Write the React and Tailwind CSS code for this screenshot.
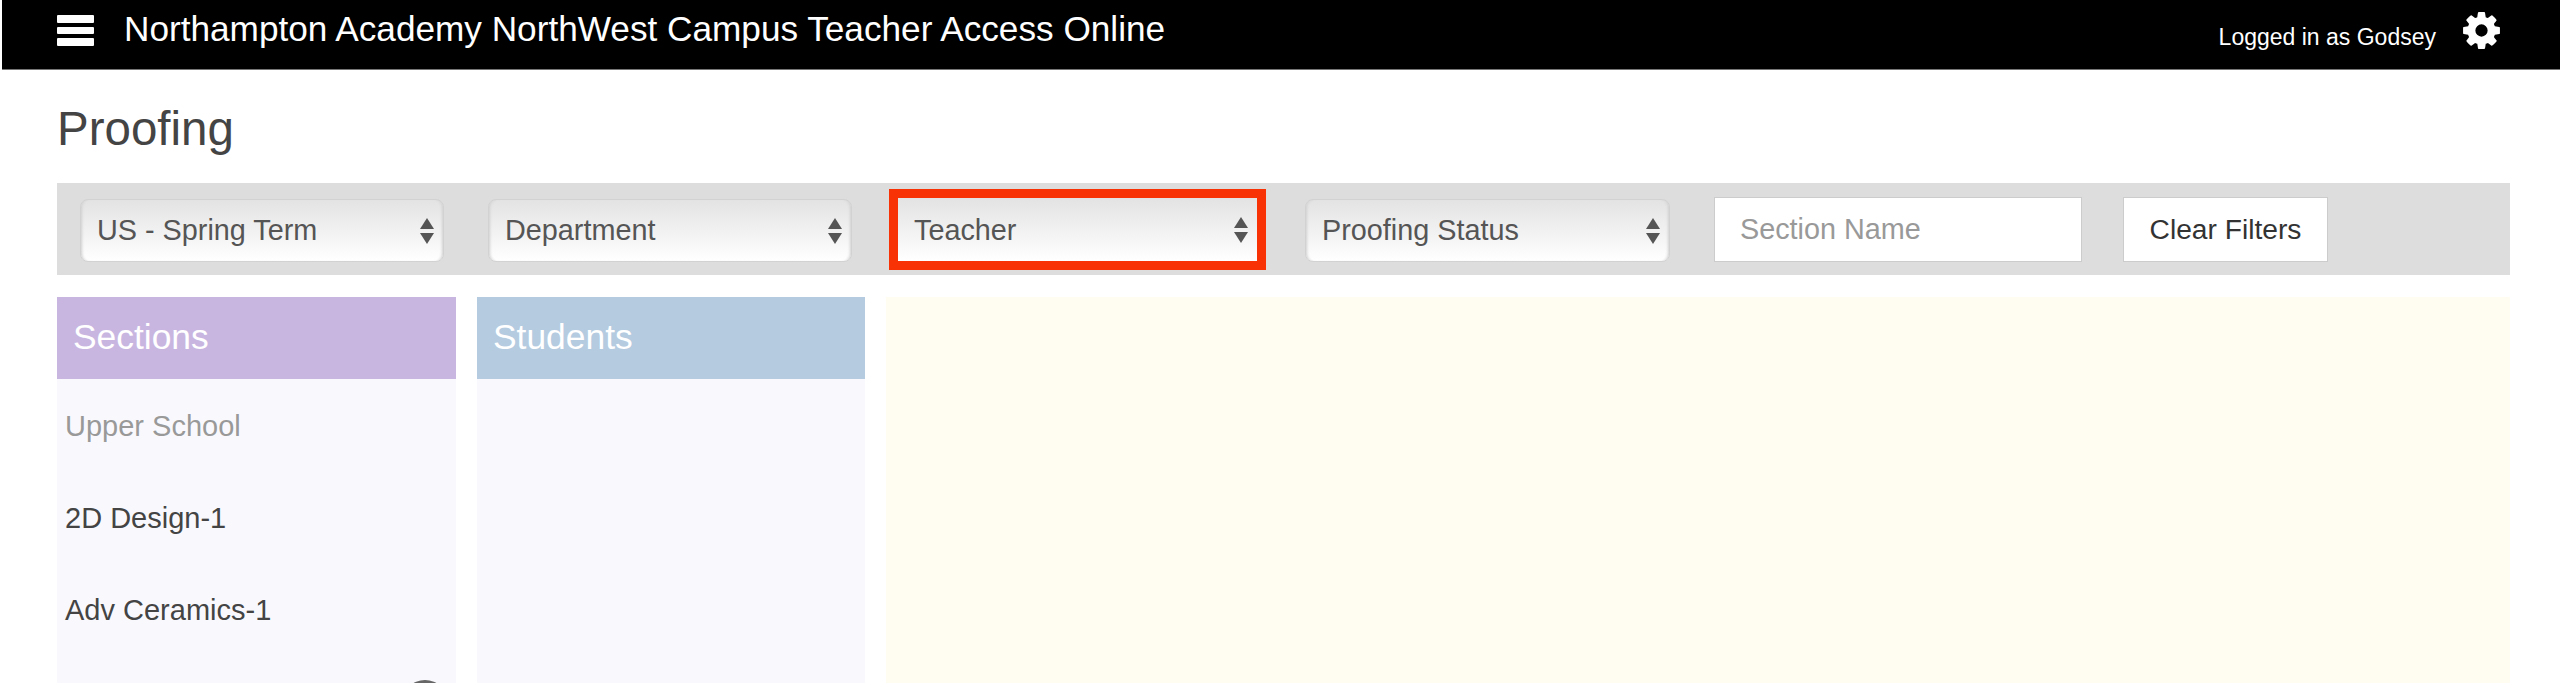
import React from 'react';

const ITEMS = [
  { label: 'Upper School', muted: true },
  { label: '2D Design-1' },
  { label: 'Adv Ceramics-1' },
];

function SelectBox({ label, highlighted, className = '' }) {
  const frame = highlighted
    ? 'rounded-none shadow-[0_0_0_9px_#f93205]'
    : 'mt-[3px] rounded-lg border border-[#d2d2d2] shadow-[inset_3px_0_3px_-2px_#cfcfcf,inset_-3px_0_3px_-2px_#cfcfcf]';
  return (
    <div className={`flex items-center justify-between h-[63px] pl-[16px] pr-[9px] bg-gradient-to-b from-[#e3e3e3] to-white text-[28.8px] text-[#555555] ${frame} ${className}`}>
      <span className={highlighted ? 'mt-[3px]' : 'mt-[1px]'}>{label}</span>
      <svg width="14" height="26" viewBox="0 0 14 26" fill="#555555" className={`shrink-0 ${highlighted ? 'mt-[1px]' : ''}`}>
        <path d="M7 0 L14 11 L0 11 Z" />
        <path d="M0 15 L14 15 L7 26 Z" />
      </svg>
    </div>
  );
}

export default function App() {
  return (
    <div className="h-[685px] overflow-hidden bg-white font-['Liberation_Sans',Arial,sans-serif]">
      <header className="h-[70px] ml-[2px] bg-black border-b border-[#777777] flex items-center text-white">
        <svg width="37" height="31" viewBox="0 0 37 31" fill="white" className="ml-[55px] -mt-[9px] shrink-0">
          <rect y="0" width="37" height="8" rx="1" />
          <rect y="12" width="37" height="7" rx="1" />
          <rect y="23" width="37" height="8" rx="1" />
        </svg>
        <h1 className="ml-[30px] text-[35.2px] leading-none -mt-[12px]">Northampton Academy NorthWest Campus Teacher Access Online</h1>
        <span className="ml-auto mt-[6px] text-[23px]">Logged in as Godsey</span>
        <svg viewBox="0 0 1792 1792" fill="white" className="ml-[24px] mr-[57px] w-[43px] h-[43px] -mt-[9px]">
          <path d="M1152 896q0-106-75-181t-181-75-181 75-75 181 75 181 181 75 181-75 75-181zm512-109v222q0 12-8 23t-20 13l-185 28q-19 54-39 91 35 50 107 138 10 12 10 25t-9 23q-27 37-99 108t-94 71q-12 0-26-9l-138-108q-44 23-91 38-16 136-29 186-7 28-36 28h-222q-14 0-24.5-8.5t-11.5-21.5l-28-184q-49-16-90-37l-141 107q-10 9-25 9-14 0-25-11-126-114-165-168-7-10-7-23 0-12 8-23 15-21 51-66.5t54-70.5q-27-50-41-99l-183-27q-13-2-21-12.5t-8-23.5v-222q0-12 8-23t19-13l186-28q14-46 39-92-40-57-107-138-10-12-10-24 0-10 9-23 26-36 98.5-107.5t94.5-71.5q13 0 26 10l138 107q44-23 91-38 16-136 29-186 7-28 36-28h222q14 0 24.5 8.5t11.5 21.5l28 184q49 16 90 37l142-107q9-9 24-9 13 0 25 10 129 119 165 170 7 8 7 22 0 12-8 23-15 21-51 66.5t-54 70.5q26 50 41 98l183 28q13 2 21 12.5t8 23.5z" />
        </svg>
      </header>

      <div className="pl-[57px] pr-[50px]">
        <h2 className="mt-[25px] h-[67px] text-[47.5px] leading-[67px] text-[#444444]">Proofing</h2>

        <div className="mt-[21px] h-[92px] bg-[#dddddd] flex items-center pl-[23px]">
          <SelectBox label="US - Spring Term" className="w-[364px]" />
          <SelectBox label="Department" className="w-[364px] ml-[44px]" />
          <SelectBox label="Teacher" highlighted className="w-[359px] ml-[46px]" />
          <SelectBox label="Proofing Status" className="w-[365px] ml-[48px]" />
          <input
            placeholder="Section Name"
            className="ml-[44px] w-[368px] h-[65px] px-[25px] bg-white border border-[#cccccc] text-[28.8px] placeholder:text-[#999999] outline-none"
          />
          <button className="ml-[41px] w-[205px] h-[65px] bg-white border border-[#cccccc] text-[28.2px] text-[#333333]">Clear Filters</button>
        </div>

        <div className="mt-[22px] h-[386px] flex gap-[21px]">
          <section className="w-[399px] bg-[#f9f9fd] overflow-hidden">
            <div className="h-[82px] bg-[#c8b6e1] flex items-center pl-[16px] text-[35.4px] text-white">Sections</div>
            {ITEMS.map((item) => (
              <div key={item.label} className={`h-[92px] pt-[4px] flex items-center pl-[8px] text-[29px] ${item.muted ? 'text-[#999999]' : 'text-[#444444]'}`}>
                {item.label}
              </div>
            ))}
            <div className="h-[92px] flex justify-end pt-[25px] pr-[8px]">
              <span className="w-[46px] h-[46px] rounded-full bg-[#666666]" />
            </div>
          </section>

          <section className="w-[388px] bg-[#f9f9fd]">
            <div className="h-[82px] bg-[#b5cbe0] flex items-center pl-[16px] text-[35.4px] text-white">Students</div>
          </section>

          <section className="flex-1 bg-[#fffdf2]" />
        </div>
      </div>
    </div>
  );
}
